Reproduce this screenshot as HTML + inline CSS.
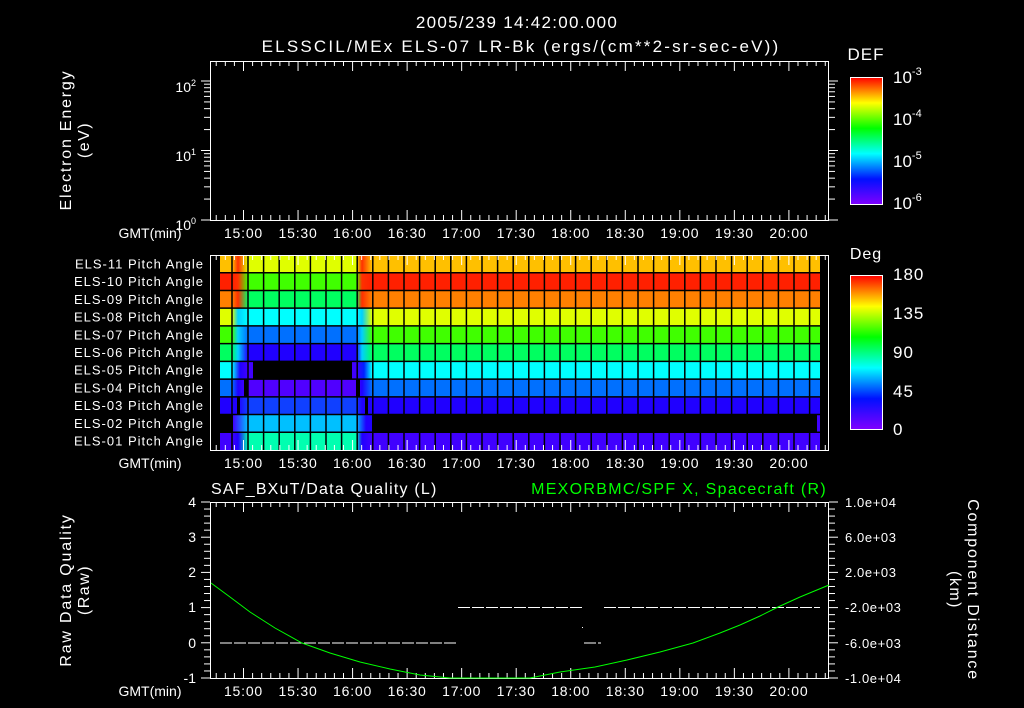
<!DOCTYPE html>
<html><head><meta charset="utf-8"><style>
html,body{margin:0;padding:0;background:#000;}
svg{display:block;}
text{font-family:"Liberation Sans",sans-serif;fill:#fff;}
</style></head><body>
<svg id="s" width="1024" height="708" viewBox="0 0 1024 708" xmlns="http://www.w3.org/2000/svg">
<defs>
<linearGradient id="rb" x1="0" y1="1" x2="0" y2="0">
<stop offset="0" stop-color="#8000ff"/><stop offset="0.2" stop-color="#0010ff"/><stop offset="0.4" stop-color="#00ffff"/><stop offset="0.6" stop-color="#00ff00"/><stop offset="0.8" stop-color="#ffff00"/><stop offset="1" stop-color="#ff0000"/>
</linearGradient>
</defs>
<rect width="1024" height="708" fill="#000"/>
<text x="517" y="28" font-size="17" letter-spacing="1.3" text-anchor="middle">2005/239 14:42:00.000</text>
<text x="521" y="52" font-size="17" letter-spacing="2.2" text-anchor="middle">ELSSCIL/MEx ELS-07 LR-Bk  (ergs/(cm**2-sr-sec-eV))</text>
<text transform="translate(71,140) rotate(-90)" font-size="16" letter-spacing="1.8" text-anchor="middle">Electron Energy</text>
<text transform="translate(89,140) rotate(-90)" font-size="16" letter-spacing="1.5" text-anchor="middle">(eV)</text>
<text x="196" y="92" font-size="14" text-anchor="end">10<tspan dy="-6" font-size="9">2</tspan></text>
<text x="196" y="161" font-size="14" text-anchor="end">10<tspan dy="-6" font-size="9">1</tspan></text>
<text x="196" y="230" font-size="14" text-anchor="end">10<tspan dy="-6" font-size="9">0</tspan></text>
<text x="866" y="60" font-size="17" letter-spacing="1" text-anchor="middle">DEF</text>
<rect x="850.5" y="77.5" width="32" height="127" fill="url(#rb)" stroke="#fff"/>
<text x="893" y="83" font-size="17">10<tspan dy="-8" font-size="11">-3</tspan></text>
<text x="893" y="125" font-size="17">10<tspan dy="-8" font-size="11">-4</tspan></text>
<text x="893" y="167" font-size="17">10<tspan dy="-8" font-size="11">-5</tspan></text>
<text x="893" y="209" font-size="17">10<tspan dy="-8" font-size="11">-6</tspan></text>
<text x="866" y="259" font-size="16" letter-spacing="1" text-anchor="middle">Deg</text>
<rect x="850.5" y="275.5" width="32" height="154" fill="url(#rb)" stroke="#fff"/>
<text x="893" y="280" font-size="17" letter-spacing="1">180</text>
<text x="893" y="319" font-size="17" letter-spacing="1">135</text>
<text x="893" y="358" font-size="17" letter-spacing="1">90</text>
<text x="893" y="397" font-size="17" letter-spacing="1">45</text>
<text x="893" y="435" font-size="17" letter-spacing="1">0</text>
<text x="211" y="494" font-size="16" letter-spacing="1.2">SAF_BXuT/Data Quality (L)</text>
<text x="827" y="494" font-size="16" letter-spacing="1.3" text-anchor="end" style="fill:#00ff00">MEXORBMC/SPF X, Spacecraft (R)</text>
<text transform="translate(71,590) rotate(-90)" font-size="16" letter-spacing="1.8" text-anchor="middle">Raw Data Quality</text>
<text transform="translate(89,590) rotate(-90)" font-size="16" letter-spacing="1.5" text-anchor="middle">(Raw)</text>
<text transform="translate(968,590) rotate(90)" font-size="16" letter-spacing="1.8" text-anchor="middle">Component Distance</text>
<text transform="translate(950,590) rotate(90)" font-size="16" letter-spacing="1.5" text-anchor="middle">(km)</text>
<g font-size="14" text-anchor="end">
<text x="196" y="507">4</text><text x="196" y="542">3</text><text x="196" y="577">2</text><text x="196" y="612">1</text><text x="196" y="648">0</text><text x="196" y="683">-1</text>
</g>
<g font-size="13" letter-spacing="0.6">
<text x="845" y="507">1.0e+04</text><text x="845" y="542">6.0e+03</text><text x="845" y="577">2.0e+03</text><text x="845" y="612">-2.0e+03</text><text x="845" y="648">-6.0e+03</text><text x="845" y="683">-1.0e+04</text>
</g>
<g id="dyn"></g>
</svg>
<script>
var NS="http://www.w3.org/2000/svg",g=document.getElementById('dyn');
function el(t,a,txt){var e=document.createElementNS(NS,t);for(var k in a)e.setAttribute(k,a[k]);if(txt)e.textContent=txt;g.appendChild(e);return e;}
function ln(x1,y1,x2,y2,c,w){el('line',{x1:x1,y1:y1,x2:x2,y2:y2,stroke:c||'#fff','stroke-width':w||1});}
function X(m){return 243.5+m*1.818;}
var labs=['15:00','15:30','16:00','16:30','17:00','17:30','18:00','18:30','19:00','19:30','20:00'];
var L=220,R=820,T=255,B=450,rh=(B-T)/11;
var outer=['#ffc000','#ff2000','#ff8000','#e0ff00','#40ff00','#00ff60','#00ffff','#0070ff','#2000ff','#000','#4000ff'];
var inner=['#e0ff00','#40ff00','#00ff60','#00ffff','#0070ff','#2000ff','#000','#5000ff','#1040ff','#00c0ff','#00ffb0'];
var names=['ELS-11','ELS-10','ELS-09','ELS-08','ELS-07','ELS-06','ELS-05','ELS-04','ELS-03','ELS-02','ELS-01'];
var defs=document.querySelector('defs');
for(var i=0;i<11;i++){
 var y=T+i*rh;
 var gr=document.createElementNS(NS,'linearGradient');gr.setAttribute('id','g'+i);gr.setAttribute('gradientUnits','userSpaceOnUse');gr.setAttribute('x1',L);gr.setAttribute('x2',R);gr.setAttribute('y1',0);gr.setAttribute('y2',0);
 var o=outer[i],n=inner[i];
 var mid=(i<3)?'#ff3000':(i<6?'#00d0ff':'#2000ff');
 var st=[[220,o],[232,o],[238,mid],[248,n],[356,n],[362,mid],[372,o],[820,o]];
 if(i==6){st=[[220,o],[232,o],[240,'#2000ff'],[248,'#4000ff'],[253,'#4000ff'],[253,'#000'],[352,'#000'],[352,'#4000ff'],[356,'#4000ff'],[364,'#0020ff'],[372,o],[820,o]];}
 if(i==9){st=[[220,'#000'],[233,'#000'],[233,'#4000ff'],[248,'#00c0ff'],[356,'#00c0ff'],[366,'#2000ff'],[372,'#2000ff'],[372,'#000'],[817,'#000'],[817,'#4000ff'],[820,'#4000ff']];}
 st.forEach(function(s){var e=document.createElementNS(NS,'stop');e.setAttribute('offset',((s[0]-L)/(R-L)));e.setAttribute('stop-color',s[1]);gr.appendChild(e);});
 defs.appendChild(gr);
 el('rect',{x:L,y:y,width:R-L,height:rh,fill:'url(#g'+i+')'});
 if(i==7){el('rect',{x:244,y:y,width:4,height:rh,fill:'#000'});el('rect',{x:356,y:y,width:4,height:rh,fill:'#000'});}
 if(i==8){el('rect',{x:237,y:y,width:3,height:rh,fill:'#000'});el('rect',{x:365,y:y,width:3,height:rh,fill:'#000'});}
 el('text',{x:204,y:y+rh/2+4.5,'font-size':13,'letter-spacing':'1','text-anchor':'end'},names[i]+' Pitch Angle');
}
for(var i=1;i<11;i++)ln(L,T+i*rh,R,T+i*rh,'#000',1.5);
ln(232,T,232,B,'#000',1.5);
for(var x=248;x<R;x+=15.6)ln(x,T,x,B,'#000',1.5);
function panel(t,b){
 el('rect',{x:210.5,y:t+0.5,width:618,height:b-t,fill:'none',stroke:'#fff'});
 for(var m=-15;m<=320;m+=5){var x=X(m),maj=(m%30==0);var h=maj?10:5;
  ln(x,t,x,t+h);ln(x,b,x,b-h);}
 labs.forEach(function(s,k){el('text',{x:X(k*30),y:b+18,'font-size':14,'letter-spacing':'0.8','text-anchor':'middle'},s);});
 el('text',{x:150,y:b+18,'font-size':14,'text-anchor':'middle'},'GMT(min)');
}
panel(61,220);panel(255,450);panel(502,678);
[220,150.5,81].forEach(function(y0){ln(201,y0,210,y0);ln(829,y0,838,y0);});
for(var d=0;d<2;d++)for(var k=2;k<10;k++){var y=220-69.5*(d+Math.log10(k));ln(204,y,210,y);ln(829,y,835,y);}
for(var v=-1;v<=4.001;v+=0.2){var y=642.8-v*35.2,maj=Math.abs(v-Math.round(v))<0.01;ln(maj?201:204,y,210,y);ln(829,y,maj?838:835,y);}
function dash(x1,x2,y){el('line',{x1:x1,y1:y,x2:x2,y2:y,stroke:'#fff','stroke-width':1,'stroke-dasharray':'12 2'});}
dash(220,458,643);dash(458,583,607.5);dash(604,820,607.5);dash(584,601,643);
el('rect',{x:582,y:627,width:1,height:1,fill:'#fff'});
el('polyline',{points:'211,583 230,597 250,612 275,628 302,643 330,653 360,662 390,669 420,675 450,678 530,678 560,672 595,667 627,660 660,652 693,643 720,633 740,625 760,616 778,607 800,597 829,585',fill:'none',stroke:'#00ff00','stroke-width':1});
</script>
</body></html>
